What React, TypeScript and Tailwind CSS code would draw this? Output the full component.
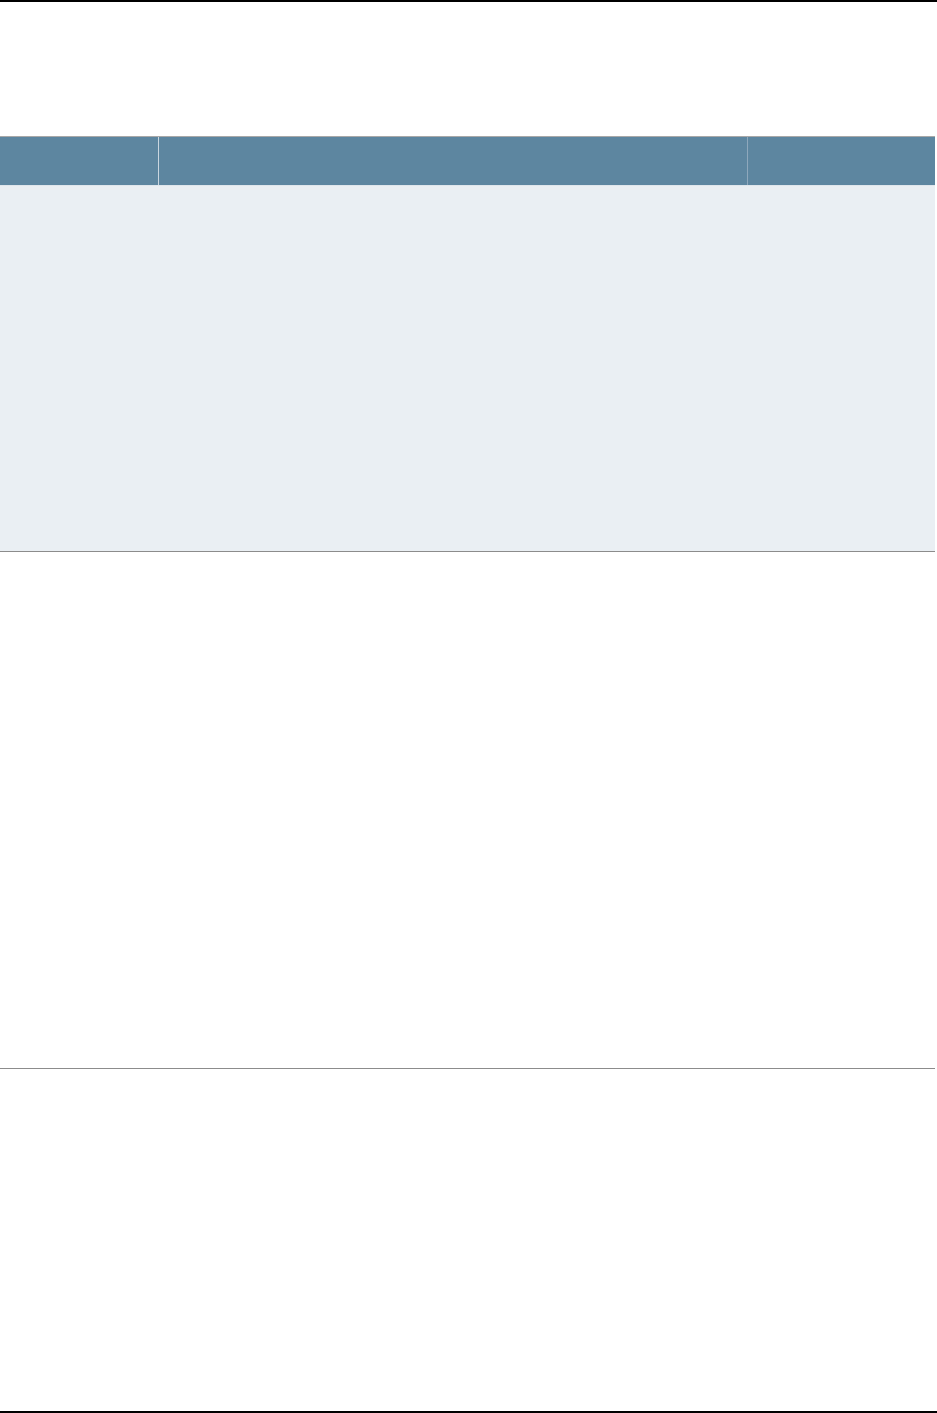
import React from 'react';

const rows = [
  { height: 'h-[366px]', shaded: true },
  { height: 'h-[517px]', shaded: false },
];

export default function App() {
  return (
    <div className="w-[937px] h-[1413px] bg-white flex flex-col font-['Liberation_Sans',sans-serif]">
      <div className="h-[2px] bg-black" />
      <div className="h-[134px]" />

      <div className="w-[935px] flex flex-col flex-1">
        {/* header */}
        <div className="border-t border-[#a8a8a8] h-[50px] bg-[#5d86a0] grid grid-cols-[158px_590px_1fr] border-b border-b-[#dfe6ec]">
          <div />
          <div className="border-l border-[#c9d6e0] border-r border-r-[#8ea8bc]" />
          <div />
        </div>

        {rows.map((row, i) => (
          <div
            key={i}
            className={`${row.height} border-b border-[#8c8c8c] ${row.shaded ? 'bg-[#eaeff3]' : 'bg-white'}`}
          />
        ))}

        <div className="flex-1 bg-white" />
      </div>

      <div className="h-[2px] bg-black" />
    </div>
  );
}
